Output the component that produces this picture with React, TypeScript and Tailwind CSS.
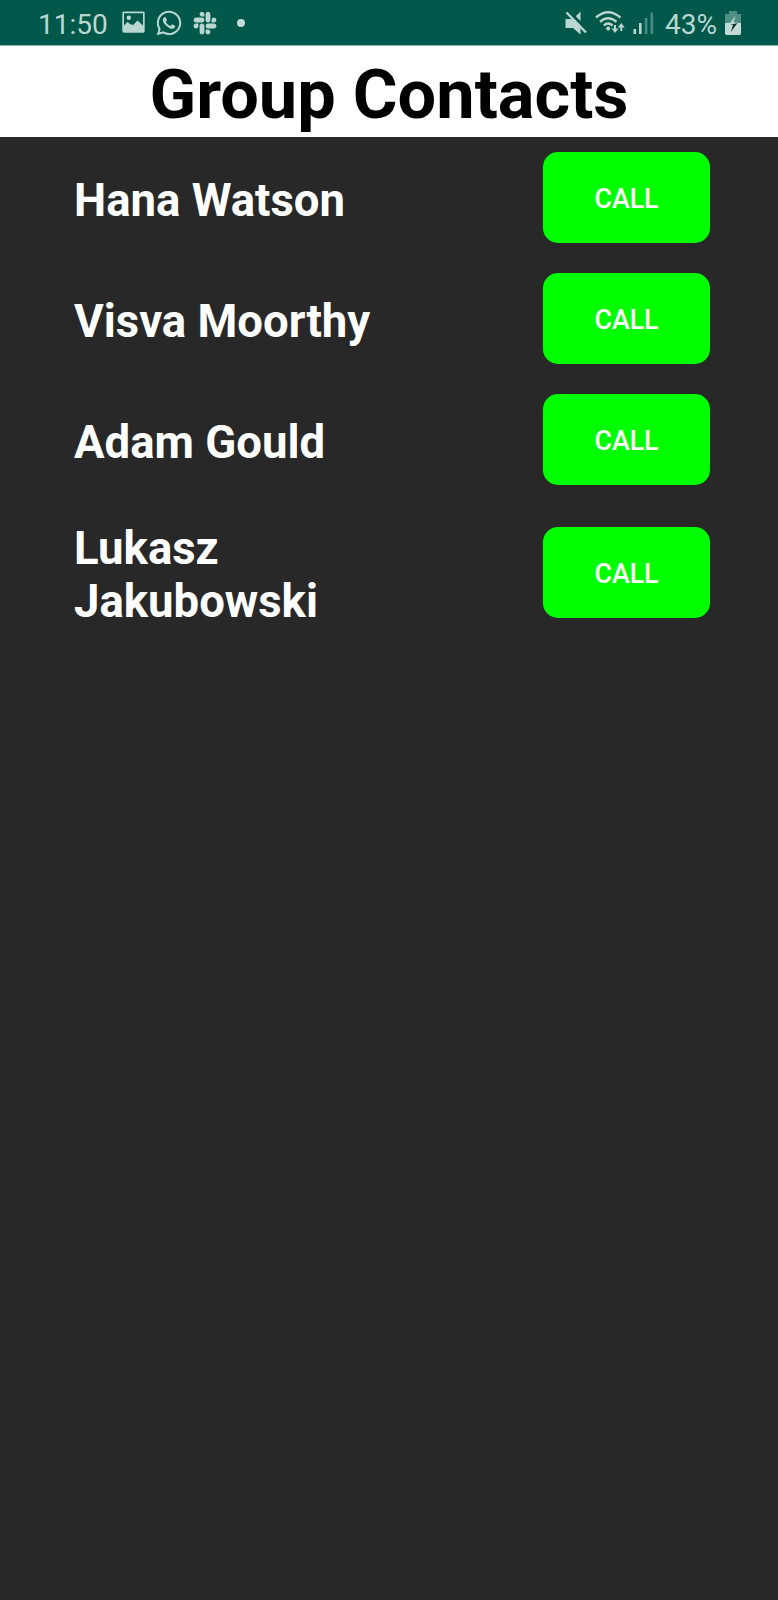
import { FaSlack, FaWhatsapp } from "react-icons/fa";

const contacts = ["Hana Watson", "Visva Moorthy", "Adam Gould", "Lukasz Jakubowski"];

function PictureIcon() {
  return (
    <svg className="ml-[14px] h-[23px] w-[23px] shrink-0" viewBox="0 0 23 23" fill="currentColor">
      <path
        fillRule="evenodd"
        d="M2 0.500H21Q22.700 0.500 22.700 2V20Q22.700 21.700 21 21.700H2Q0.300 21.700 0.300 20V2Q0.300 0.500 2 0.500ZM2 2.300V14.500L5.500 11L8.500 13.200L11 14L15.500 9.500L21 14.500V2.300Z"
      />
      <circle cx="6.800" cy="6.800" r="2.200" />
    </svg>
  );
}

function MutedIcon() {
  return (
    <svg className="h-[24px] w-[22px] shrink-0" viewBox="0 0 22 24">
      <path d="M0.500 8H8L15.500 0.500V23.500L8 17H0.500Z" fill="currentColor" />
      <path d="M3.500 0L24 21" stroke="#00584b" strokeWidth="3" />
      <path d="M1.500 1.500L21 21.500" stroke="currentColor" strokeWidth="2.400" />
    </svg>
  );
}

function WifiIcon() {
  return (
    <svg className="ml-[8px] h-[24px] w-[31px] shrink-0" viewBox="0 0 31 24" fill="none" stroke="currentColor">
      <g strokeWidth="2.400">
        <path d="M1 6.500Q13 -4 25.500 6.500" />
        <path d="M5 10.800Q13 3.500 21.500 10.800" />
        <path d="M8.800 14.500Q13 10.500 17.600 14.500" />
      </g>
      <circle cx="13.200" cy="17.600" r="2" fill="currentColor" stroke="none" />
      <path d="M20 14V20M26.300 20V14" strokeWidth="2" />
      <path d="M16.500 17.500H23.500L20 22ZM22.800 16.500H29.800L26.300 12Z" fill="currentColor" stroke="none" />
    </svg>
  );
}

function SignalIcon() {
  return (
    <svg className="ml-[7px] h-[22px] w-[21px] shrink-0" viewBox="0 0 21 22" fill="currentColor">
      <rect x="0.500" y="17" width="2.600" height="5" />
      <rect x="6" y="11" width="2.600" height="11" />
      <rect x="11.800" y="6" width="2.600" height="16" opacity="0.4" />
      <rect x="17.500" y="0.500" width="2.600" height="21.500" opacity="0.4" />
    </svg>
  );
}

function BatteryIcon() {
  return (
    <svg className="ml-[8px] h-[24px] w-[16px] shrink-0" viewBox="0 0 16 24">
      <path d="M4 0H12V3H16V12H0V3H4Z" fill="#4e8e84" />
      <path d="M0 12H16V22Q16 24 14.500 24H1.500Q0 24 0 22Z" fill="#c3dad6" />
      <path d="M10.500 5L3.500 14H8L5.800 21L13 11.500H8.500Z" fill="#c3dad6" />
      <path d="M5 14H8L5.800 21L12.500 12" fill="#08352e" />
    </svg>
  );
}

export default function App() {
  return (
    <div className="flex min-h-[1600px] w-full flex-col bg-[#282828] font-[Roboto,sans-serif]">
      <div className="flex h-[45px] items-center justify-between bg-[#00584b] pr-[37px] pl-[38px] text-[28px] leading-none text-[#b9d6d1]">
        <div className="flex items-center">
          <span className="pt-[4px]">11:50</span>
          <PictureIcon />
          <FaWhatsapp className="ml-[10px] size-[28px] shrink-0" />
          <FaSlack className="ml-[9px] size-[26px] shrink-0" />
          <span className="ml-[19px] size-[8px] rounded-full bg-[#c3dad6]" />
        </div>
        <div className="flex items-center">
          <MutedIcon />
          <WifiIcon />
          <SignalIcon />
          <span className="ml-[11px] pt-[4px]">43%</span>
          <BatteryIcon />
        </div>
      </div>
      <h1 className="h-[92px] border-t border-[#8fb5ae] bg-white pt-[9px] text-center text-[68.500px] leading-[80px] font-bold text-black">
        Group Contacts
      </h1>
      <ul className="flex flex-col">
        {contacts.map((name) => (
          <li key={name} className="flex min-h-[121px] items-center justify-between pr-[68px] pl-[74px]">
            <span className="w-[320px] pt-[23.400px] pb-[16.600px] text-[45.500px] leading-[52.600px] font-bold text-white">
              {name}
            </span>
            <button className="h-[91px] w-[167px] rounded-[15px] bg-[#00ff00] pt-[3px] text-[26.800px] font-medium text-white">
              CALL
            </button>
          </li>
        ))}
      </ul>
    </div>
  );
}
